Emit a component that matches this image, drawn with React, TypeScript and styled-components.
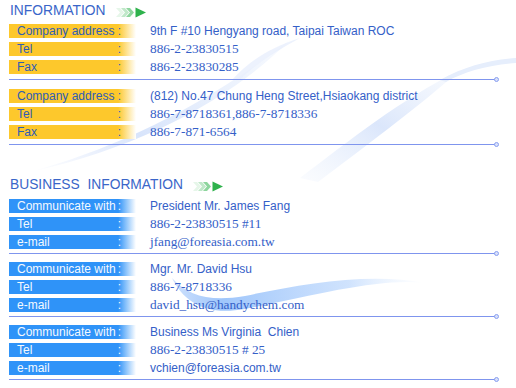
import React from "react";
import styled, { createGlobalStyle, css } from "styled-components";

const Global = createGlobalStyle`
  html, body { margin: 0; padding: 0; background: #ffffff; }
  body { font-family: "Liberation Sans", Arial, sans-serif; }
`;

type Tone = "yellow" | "blue";
type Face = "sans" | "serif";

interface RowData { label: string; value: string; face: Face; }

const info: RowData[][] = [
  [
    { label: "Company address", value: "9th F #10 Hengyang road, Taipai Taiwan ROC", face: "sans" },
    { label: "Tel", value: "886-2-23830515", face: "serif" },
    { label: "Fax", value: "886-2-23830285", face: "serif" },
  ],
  [
    { label: "Company address", value: "(812) No.47 Chung Heng Street,Hsiaokang district", face: "sans" },
    { label: "Tel", value: "886-7-8718361,886-7-8718336", face: "serif" },
    { label: "Fax", value: "886-7-871-6564", face: "serif" },
  ],
];

const business: RowData[][] = [
  [
    { label: "Communicate with", value: "President Mr. James Fang", face: "sans" },
    { label: "Tel", value: "886-2-23830515 #11", face: "serif" },
    { label: "e-mail", value: "jfang@foreasia.com.tw", face: "serif" },
  ],
  [
    { label: "Communicate with", value: "Mgr. Mr. David Hsu", face: "sans" },
    { label: "Tel", value: "886-7-8718336", face: "serif" },
    { label: "e-mail", value: "david_hsu@handychem.com", face: "serif" },
  ],
  [
    { label: "Communicate with", value: "Business Ms Virginia\u00a0 Chien", face: "sans" },
    { label: "Tel", value: "886-2-23830515 # 25", face: "serif" },
    { label: "e-mail", value: "vchien@foreasia.com.tw", face: "sans" },
  ],
];

const Page = styled.div`
  position: relative;
  width: 516px;
  height: 388px;
  overflow: hidden;
  background: #fff;
`;

const Backdrop = styled.svg`
  position: absolute;
  left: 0;
  top: 0;
  z-index: 0;
  pointer-events: none;
`;

const Content = styled.div`
  position: relative;
  z-index: 1;
  display: flex;
  flex-direction: column;
  padding: 3px 0 0 9px;
`;

const Section = styled.section<{ $top: number }>`
  display: flex;
  flex-direction: column;
  margin-top: ${(p) => p.$top}px;
`;

const Title = styled.h2`
  display: flex;
  align-items: center;
  margin: 0 0 0 1px;
  height: 16px;
  font-family: "Liberation Sans", Arial, sans-serif;
  font-weight: normal;
  font-size: 13.8px;
  line-height: 16px;
  color: #3a66c9;
  white-space: pre;
`;

const ArrowMark = styled.svg`
  margin-left: 10px;
  margin-top: 2px;
`;

const Block = styled.div<{ $top: number }>`
  display: flex;
  flex-direction: column;
  gap: 4px;
  margin-top: ${(p) => p.$top}px;
`;

const Row = styled.div`
  display: grid;
  grid-template-columns: 127px 1fr;
  column-gap: 14px;
  height: 14px;
  align-items: center;
`;

const toneStyles = {
  yellow: css`
    background: linear-gradient(to right, #fdc82c 0%, #fdc82c 86%, #fff 100%);
    color: #2f5db5;
  `,
  blue: css`
    background: linear-gradient(to right, #2f93f8 0%, #2f93f8 86%, #fff 100%);
    color: #f4f9ff;
  `,
};

const Label = styled.div<{ $tone: Tone }>`
  display: flex;
  justify-content: space-between;
  height: 14px;
  padding: 0 15px 0 8px;
  font-family: "Liberation Sans", Arial, sans-serif;
  font-size: 12px;
  line-height: 14px;
  ${(p) => toneStyles[p.$tone]}
`;

const Value = styled.div<{ $face: Face }>`
  white-space: pre;
  line-height: 14px;
  color: #3460c8;
  ${(p) =>
    p.$face === "sans"
      ? css`
          font-family: "Liberation Sans", Arial, sans-serif;
          font-size: 12px;
        `
      : css`
          font-family: "Liberation Serif", "Times New Roman", serif;
          font-size: 13.3px;
        `}
`;

const Divider = styled.div<{ $top: number }>`
  position: relative;
  width: 486px;
  height: 1px;
  margin-top: ${(p) => p.$top}px;
  background: #7f95ee;
  &::after {
    content: "";
    position: absolute;
    right: -4px;
    top: -2px;
    width: 3px;
    height: 3px;
    border: 1px solid #8aa0f0;
    border-radius: 50%;
    background: #d8e0fb;
  }
`;

const Arrows: React.FC = () => (
  <ArrowMark width="31" height="11" viewBox="0 0 31 11">
    <path d="M0 1 L4 1 L8 5.5 L4 10 L0 10 L4 5.5 Z" fill="#2fb24c" opacity="0.12" />
    <path d="M5 1 L9 1 L13 5.5 L9 10 L5 10 L9 5.5 Z" fill="#2fb24c" opacity="0.3" />
    <path d="M10 1 L14 1 L18 5.5 L14 10 L10 10 L14 5.5 Z" fill="#2fb24c" opacity="0.55" />
    <path d="M19.5 0.5 L30 5.5 L19.5 10.5 Z" fill="#2fb24c" />
  </ArrowMark>
);

const Swooshes: React.FC = () => (
  <Backdrop width="516" height="388" viewBox="0 0 516 388">
    <defs>
      <linearGradient id="gA" x1="0" y1="1" x2="1" y2="0">
        <stop offset="0" stopColor="#dfe8fb" stopOpacity="0" />
        <stop offset="0.35" stopColor="#d6e3fb" stopOpacity="0.95" />
        <stop offset="1" stopColor="#e6eefc" stopOpacity="0.3" />
      </linearGradient>
      <linearGradient id="gB" x1="0" y1="1" x2="1" y2="0">
        <stop offset="0" stopColor="#e9f0fc" stopOpacity="0.2" />
        <stop offset="0.5" stopColor="#d9e5fb" stopOpacity="0.95" />
        <stop offset="1" stopColor="#e9f0fc" stopOpacity="0.3" />
      </linearGradient>
      <linearGradient id="gD" x1="0" y1="0" x2="1" y2="0">
        <stop offset="0" stopColor="#9fc4fa" stopOpacity="0.5" />
        <stop offset="0.2" stopColor="#9fc6fb" stopOpacity="1" />
        <stop offset="0.7" stopColor="#c4dcfd" stopOpacity="0.8" />
        <stop offset="1" stopColor="#e2eefe" stopOpacity="0" />
      </linearGradient>
    </defs>
    <path d="M30 172 C110 150 200 110 290 40 C235 95 150 145 30 172 Z" fill="url(#gA)" />
    <path d="M232 80 C250 60 270 48 300 38 C275 52 255 64 240 80 Z" fill="#e8effc" opacity="0.8" />
    <path d="M300 178 C350 140 400 100 460 70 C415 110 360 150 318 182 Z" fill="url(#gB)" />
    <path d="M440 80 C465 66 490 60 516 58 L516 63 C490 65 465 71 446 82 Z" fill="#e6eefc" />
    <path d="M172 278 C184 302 205 316 245 309 C320 294 380 278 425 283 C370 272 300 284 245 296 C210 302 188 296 172 278 Z" fill="url(#gD)" />
  </Backdrop>
);

interface GroupProps { blocks: RowData[][]; tone: Tone; first: number; between: number; line: number; }

const Group: React.FC<GroupProps> = ({ blocks, tone, first, between, line }) => (
  <>
    {blocks.map((rows, bi) => (
      <React.Fragment key={bi}>
        <Block $top={bi === 0 ? first : between}>
          {rows.map((r, ri) => (
            <Row key={ri}>
              <Label $tone={tone}>
                <span>{r.label}</span>
                <span>:</span>
              </Label>
              <Value $face={r.face}>{r.value}</Value>
            </Row>
          ))}
        </Block>
        <Divider $top={line} />
      </React.Fragment>
    ))}
  </>
);

export default function App() {
  return (
    <Page>
      <Global />
      <Swooshes />
      <Content>
        <Section $top={0}>
          <Title>
            INFORMATION
            <Arrows />
          </Title>
          <Group blocks={info} tone="yellow" first={5} between={9} line={5} />
        </Section>
        <Section $top={32}>
          <Title>
            {"BUSINESS  INFORMATION"}
            <Arrows />
          </Title>
          <Group blocks={business} tone="blue" first={6} between={8} line={4} />
        </Section>
      </Content>
    </Page>
  );
}
